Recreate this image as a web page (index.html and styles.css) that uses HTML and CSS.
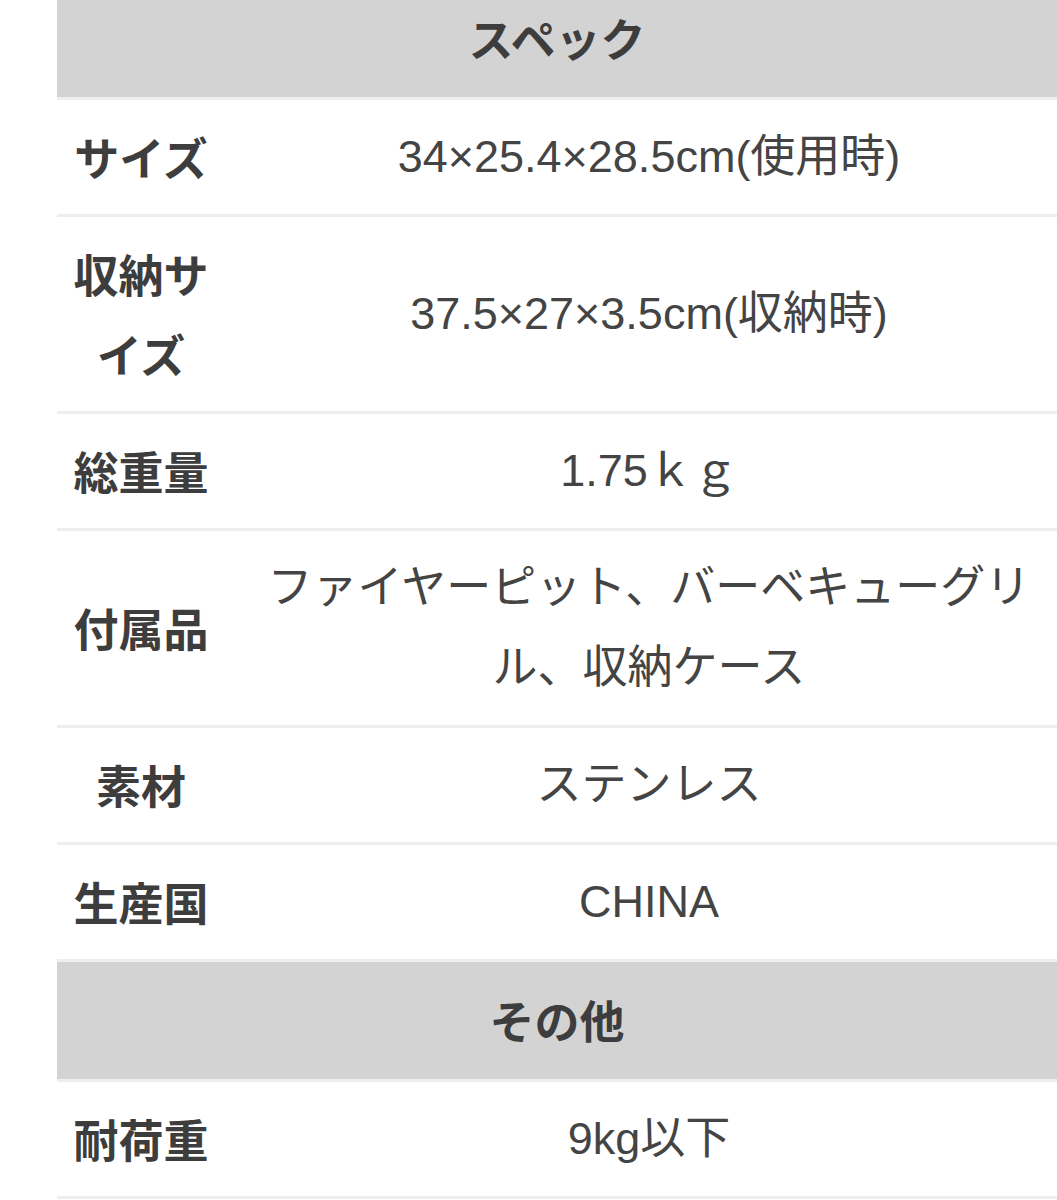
FILE: index.html
```html
<!DOCTYPE html>
<html lang="ja">
<head>
<meta charset="utf-8">
<title>スペック</title>
<link rel="stylesheet" href="styles.css">
</head>
<body>
<table class="spec">
  <colgroup>
    <col class="col-label">
    <col class="col-value">
  </colgroup>
  <tbody>
    <tr class="section"><th colspan="2">スペック</th></tr>
    <tr><th class="label">サイズ</th><td class="value">34×25.4×28.5cm(使用時)</td></tr>
    <tr><th class="label">収納サイズ</th><td class="value">37.5×27×3.5cm(収納時)</td></tr>
    <tr><th class="label">総重量</th><td class="value">1.75ｋｇ</td></tr>
    <tr><th class="label">付属品</th><td class="value">ファイヤーピット、バーベキューグリル、収納ケース</td></tr>
    <tr><th class="label">素材</th><td class="value">ステンレス</td></tr>
    <tr><th class="label">生産国</th><td class="value">CHINA</td></tr>
    <tr class="section"><th colspan="2">その他</th></tr>
    <tr><th class="label">耐荷重</th><td class="value">9kg以下</td></tr>
  </tbody>
</table>
</body>
</html>
```
FILE: styles.css
```css
html, body {
  margin: 0;
  padding: 0;
  background: #ffffff;
}

body {
  font-family: "Liberation Sans", "Noto Sans CJK JP", sans-serif;
  color: #3d3d3d;
  overflow: hidden;
}

.spec {
  margin: -20px 0 0 57px;
  width: 1000px;
  border-collapse: collapse;
  table-layout: fixed;
}

.col-label {
  width: 168px;
}

.spec tr {
  border-bottom: 3px solid #eeeeee;
}

.spec th,
.spec td {
  font-size: 45px;
  line-height: 80px;
  vertical-align: middle;
  text-align: center;
}

.section th {
  background: #d3d3d3;
  font-family: "Noto Sans CJK JP", sans-serif;
  font-weight: 700;
  color: #3d3d3d;
  padding: 18px 0 19px;
}

.label {
  font-family: "Noto Sans CJK JP", sans-serif;
  font-weight: 700;
  color: #3d3d3d;
  padding: 17px 16px;
}

.value {
  font-weight: 400;
  color: #444444;
  padding: 17px 4px 17px 20px;
}
```
